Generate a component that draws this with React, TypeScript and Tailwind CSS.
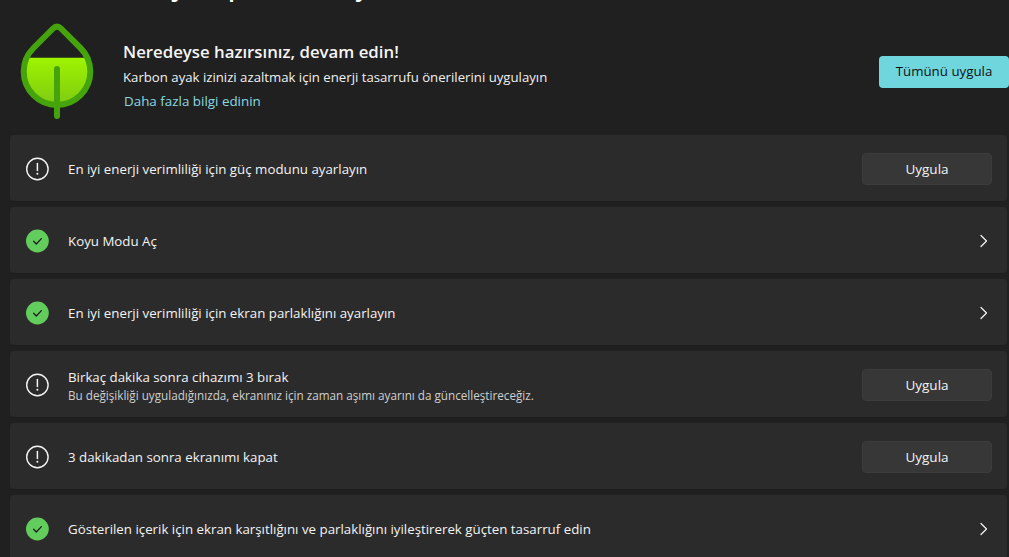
const FONT = "font-['Open_Sans','Noto_Sans',sans-serif]";

function Leaf() {
  return (
    <svg width="74" height="98" viewBox="0 0 74 98" fill="none" className="shrink-0">
      <defs>
        <linearGradient id="leafFill" x1="0" y1="0" x2="0" y2="1">
          <stop offset="0" stopColor="#9ff400" />
          <stop offset="1" stopColor="#7ecb12" />
        </linearGradient>
      </defs>
      <path d="M7 34.7 H67 A33 33 0 1 1 7 34.7 Z" fill="url(#leafFill)" />
      <path
        d="M33 5.5 L13.5 25 A33.3 33.3 0 1 0 60.5 25 L41 5.5 Q37 1.5 33 5.5 Z"
        stroke="#45a30c"
        strokeWidth="6"
        strokeLinejoin="round"
      />
      <path d="M37 46 V93" stroke="#45a30c" strokeWidth="6" strokeLinecap="round" />
    </svg>
  );
}

function Warn() {
  return (
    <svg width="24" height="24" viewBox="0 0 24 24" fill="none" className="shrink-0">
      <circle cx="11.4" cy="12" r="10.7" stroke="#f5f5f5" strokeWidth="1.4" />
      <path d="M11.4 6.5 V13.5" stroke="#f5f5f5" strokeWidth="1.5" strokeLinecap="round" />
      <circle cx="11.4" cy="16.8" r="1" fill="#f5f5f5" />
    </svg>
  );
}

function Ok() {
  return (
    <svg width="24" height="24" viewBox="0 0 24 24" fill="none" className="shrink-0">
      <circle cx="11.4" cy="12" r="11.4" fill="#62cc5c" />
      <path d="M7.6 12.3 L10.3 15 L15.4 9.6" stroke="#1c1c1c" strokeWidth="1.3" strokeLinecap="round" strokeLinejoin="round" />
    </svg>
  );
}

function Chevron() {
  return (
    <svg width="10" height="14" viewBox="0 0 10 14" fill="none" className="mr-[3px]">
      <path d="M2 1.5 L7.5 7 L2 12.5" stroke="#f0f0f0" strokeWidth="1.3" strokeLinecap="round" strokeLinejoin="round" />
    </svg>
  );
}

type RowProps = { ok?: boolean; title: string; sub?: string };

function Row({ ok, title, sub }: RowProps) {
  return (
    <div className="h-[67px] shrink-0 flex items-center rounded-[4px] bg-[#2b2b2b] border-b border-[#1d1d1d] pt-[2px] pl-[16px] pr-[15px]">
      {ok ? <Ok /> : <Warn />}
      <div className={`ml-[18px] flex-1 min-w-0 ${sub ? "pt-[2px]" : ""}`}>
        <div className="text-[13.3px] leading-[17px] text-[#f3f3f3]">{title}</div>
        {sub && <div className="text-[11.7px] leading-[16px] mt-[1px] text-[#cfcfcf]">{sub}</div>}
      </div>
      {ok ? (
        <Chevron />
      ) : (
        <button className="w-[130px] h-[32px] rounded-[4px] bg-[#373737] border border-[#3c3c3c] text-[13.5px] text-[#f3f3f3]">
          Uygula
        </button>
      )}
    </div>
  );
}

export default function App() {
  return (
    <div className={`w-[1009px] h-[557px] overflow-hidden bg-[#202020] ${FONT}`}>
      {/* page title, scrolled almost out of view */}
      <div className="h-0 pl-[10px] -translate-y-[33px]">
        <div className="text-[25px] leading-[38px] font-semibold text-white whitespace-nowrap">
          Sistem &gt; Enerji ve pil modu ayarları
        </div>
      </div>
      <div className="h-[135px] pl-[20px] flex items-start">
        <div className="pt-[23px]">
          <Leaf />
        </div>
        <div className="ml-[29px] pt-[40px] flex-1">
          <div className="text-[16.8px] leading-[24px] font-semibold text-[#f5f5f5]">Neredeyse hazırsınız, devam edin!</div>
          <div className="text-[13.2px] leading-[18px] mt-[4px] text-[#f0f0f0]">
            Karbon ayak izinizi azaltmak için enerji tasarrufu önerilerini uygulayın
          </div>
          <div className="text-[13.4px] leading-[18px] mt-[6px] ml-[1px] text-[#8bd8e0]">Daha fazla bilgi edinin</div>
        </div>
        <button className="mt-[56px] w-[130px] h-[32px] rounded-[4px] bg-[#6fd6dd] text-[13.3px] text-[#111]">
          Tümünü uygula
        </button>
      </div>
      <div className="ml-[10px] mr-[2px] flex flex-col gap-[5px]">
        <Row title="En iyi enerji verimliliği için güç modunu ayarlayın" />
        <Row ok title="Koyu Modu Aç" />
        <Row ok title="En iyi enerji verimliliği için ekran parlaklığını ayarlayın" />
        <Row
          title="Birkaç dakika sonra cihazımı 3 bırak"
          sub="Bu değişikliği uyguladığınızda, ekranınız için zaman aşımı ayarını da güncelleştireceğiz."
        />
        <Row title="3 dakikadan sonra ekranımı kapat" />
        <Row ok title="Gösterilen içerik için ekran karşıtlığını ve parlaklığını iyileştirerek güçten tasarruf edin" />
      </div>
    </div>
  );
}
